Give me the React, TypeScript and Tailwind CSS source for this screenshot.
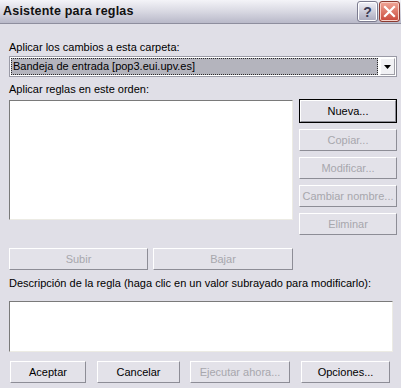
import React from "react";

const font = { fontFamily: '"Liberation Sans", Arial, sans-serif' };

function Btn({
  label,
  w,
  disabled = false,
  def = false,
}: {
  label: string;
  w: string;
  disabled?: boolean;
  def?: boolean;
}) {
  const inner = (
    <div
      className={`flex h-full w-full items-center justify-center border border-t-white border-l-white border-r-[#8d8d96] border-b-[#8d8d96] bg-[#e3e2e9] text-[11px] leading-none ${
        disabled ? "text-[#a7a7ad]" : "text-black"
      }`}
    >
      {label}
    </div>
  );
  return (
    <div className={`${w} ${def ? "h-[24px] border border-black" : "h-[22px]"} shrink-0`}>
      {inner}
    </div>
  );
}

export default function App() {
  return (
    <div className="w-[401px] h-[388px] bg-[#e0dfe7] flex flex-col overflow-hidden" style={font}>
      {/* Title bar */}
      <div className="h-[23px] flex items-center justify-between bg-gradient-to-b from-[#f4f4f8] via-[#d8d8e2] to-[#b9b9c9] pl-[3px] pr-[1px]">
        <span className="text-[12.5px] font-bold text-[#111] tracking-[0.2px]">Asistente para reglas</span>
        <div className="flex gap-[1px]">
          <div className="w-[21px] h-[21px] rounded-[3px] border border-[#7c7c90] bg-gradient-to-b from-[#f2f2f8] to-[#a9a9bd] flex items-center justify-center shadow-[inset_0_0_0_1px_#ffffff]">
            <span className="text-[14px] font-bold text-[#3c3c55] leading-none">?</span>
          </div>
          <div className="w-[21px] h-[21px] rounded-[3px] border border-[#8c3a30] bg-gradient-to-b from-[#f0a698] to-[#c8463a] flex items-center justify-center shadow-[inset_0_0_0_1px_#f7d0c8]">
            <svg width="13" height="13" viewBox="0 0 13 13">
              <path d="M2 2 L11 11 M11 2 L2 11" stroke="white" strokeWidth="2.2" strokeLinecap="square" />
            </svg>
          </div>
        </div>
      </div>
      <div className="h-[1px] bg-[#8e8e9e]" />

      <div className="flex flex-col pl-[9px] pr-[4px] text-[11px] text-black">
        <div className="mt-[17px] h-[13px] leading-[13px]">Aplicar los cambios a esta carpeta:</div>
        {/* combo */}
        <div className="mt-[2px] h-[21px] w-[388px] border border-[#9a9aa6] bg-white p-[1px] flex">
          <div className="flex-1 bg-[#b4b4bd] border border-dotted border-[#2a2a2a] flex items-center pl-[1px] text-[11px] leading-none">
            Bandeja de entrada [pop3.eui.upv.es]
          </div>
          <div className="w-[2px]" />
          <div className="w-[15px] border border-t-white border-l-white border-r-[#a0a0a8] border-b-[#a0a0a8] bg-[#f1f1f4] flex items-center justify-center">
            <svg width="7" height="4" viewBox="0 0 7 4">
              <path d="M0 0 H7 L3.5 4 Z" fill="black" />
            </svg>
          </div>
        </div>
        <div className="mt-[6px] h-[13px] leading-[13px]">Aplicar reglas en este orden:</div>

        <div className="mt-[4px] flex gap-[6px]">
          <div className="flex flex-col w-[284px]">
            <div className="h-[120px] bg-white border border-t-[#7a7a7a] border-l-[#7a7a7a] border-r-[#ecebe4] border-b-[#ecebe4]" />
            <div className="mt-[28px] flex gap-[5px]">
              <Btn label="Subir" w="w-[139px]" disabled />
              <Btn label="Bajar" w="w-[140px]" disabled />
            </div>
          </div>
          <div className="flex flex-col gap-[6px] w-[98px] -mt-[1px]">
            <Btn label="Nueva..." w="w-[98px]" def />
            <Btn label="Copiar..." w="w-[98px]" disabled />
            <Btn label="Modificar..." w="w-[98px]" disabled />
            <Btn label="Cambiar nombre..." w="w-[98px]" disabled />
            <Btn label="Eliminar" w="w-[98px]" disabled />
          </div>
        </div>

        <div className="mt-[7px] h-[13px] leading-[13px]">
          Descripción de la regla (haga clic en un valor subrayado para modificarlo):
        </div>
        <div className="mt-[11px] h-[51px] w-[384px] bg-white border border-t-[#7a7a7a] border-l-[#7a7a7a] border-r-[#ecebe4] border-b-[#ecebe4]" />

        <div className="mt-[9px] flex">
          <Btn label="Aceptar" w="w-[76px] ml-[1px]" />
          <Btn label="Cancelar" w="w-[83px] ml-[11px]" />
          <Btn label="Ejecutar ahora..." w="w-[100px] ml-[10px]" disabled />
          <Btn label="Opciones..." w="w-[89px] ml-[11px]" />
        </div>
      </div>
    </div>
  );
}
